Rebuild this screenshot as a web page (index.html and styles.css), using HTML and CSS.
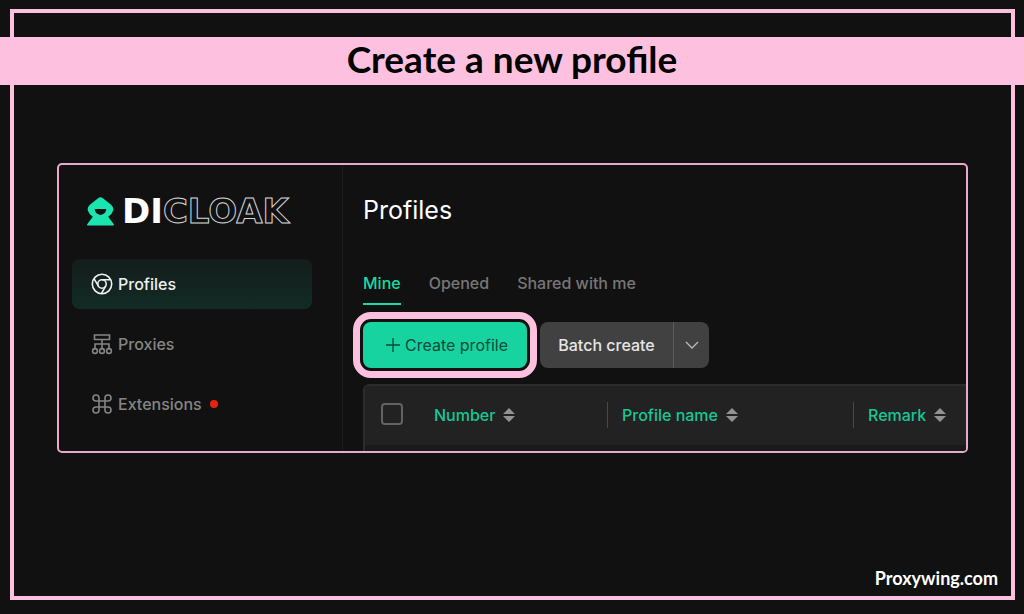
FILE: index.html
```html
<!DOCTYPE html>
<html lang="en">
<head>
<meta charset="utf-8">
<meta name="viewport" content="width=device-width, initial-scale=1">
<title>Create a new profile</title>
<link rel="stylesheet" href="styles.css">
</head>
<body>
<div class="frame">
  <h1 class="banner">Create a new profile</h1>
  <div class="app">
    <aside class="sidebar">
      <div class="brand">
        <svg class="brand-mark" viewBox="0 0 28 30" aria-hidden="true">
          <path fill="#1ae5b0" fill-rule="evenodd" d="M11.5 1.2Q14 -0.600 16.500 1.200L25 8Q28 11 27.200 14Q26 18 22 20.500L28 28.500Q28 29.500 27 29.500H1Q0 29.500 0 28.500L6 20.500Q2 18 0.800 14Q0 11 3 8ZM8 12.500C8 16 11 18.500 14 18.500S20 16 20 12.500Z"/>
        </svg>
        <span class="wordmark">DI<span class="wordmark-outline">CLOAK</span></span>
      </div>
      <nav class="nav">
        <a class="nav-item active" href="#profiles">
          <svg class="icon" viewBox="0 0 22 22" aria-hidden="true"><circle cx="11" cy="11" r="9.700"/><circle cx="11" cy="11" r="4.200"/><path d="M11 6.800H19.600M7.400 13.200L3 5.600M14.600 13.200L10.400 20.600"/></svg>
          Profiles
        </a>
        <a class="nav-item" href="#proxies">
          <svg class="icon" viewBox="0 0 22 22" aria-hidden="true"><path d="M3.500 2H18.500V6.500H3.500ZM11 6.500V15.500M4 15.500V11H18V15.500"/><circle cx="4" cy="18" r="2.400"/><circle cx="11" cy="18" r="2.400"/><circle cx="18" cy="18" r="2.400"/></svg>
          Proxies
        </a>
        <a class="nav-item" href="#extensions">
          <svg class="icon" viewBox="0 0 22 22" aria-hidden="true"><path d="M8 8H14V14H8ZM8 8H5A3 3 0 1 1 8 5ZM14 8V5A3 3 0 1 1 17 8ZM14 14H17A3 3 0 1 1 14 17ZM8 14V17A3 3 0 1 1 5 14Z"/></svg>
          Extensions
          <span class="dot"></span>
        </a>
      </nav>
    </aside>
    <main class="main">
      <h2 class="page-title">Profiles</h2>
      <nav class="tabs">
        <a class="tab selected" href="#mine">Mine</a>
        <a class="tab" href="#opened">Opened</a>
        <a class="tab" href="#shared">Shared with me</a>
      </nav>
      <div class="toolbar">
        <button class="create" type="button">
          <svg class="plus" viewBox="0 0 14 14" aria-hidden="true"><path d="M7 0V14M0 7H14"/></svg>
          Create profile
        </button>
        <div class="split">
          <button class="batch" type="button">Batch create</button>
          <button class="more" type="button" aria-label="More create options">
            <svg class="chevron" viewBox="0 0 14 8" aria-hidden="true"><path d="M1 1L7 7L13 1"/></svg>
          </button>
        </div>
      </div>
      <table class="grid">
        <colgroup><col class="col-check"><col class="col-number"><col class="col-name"><col></colgroup>
        <thead>
          <tr>
            <th><input class="check" type="checkbox" aria-label="Select all"></th>
            <th><div class="head">Number <svg class="sort" viewBox="0 0 12 14" aria-hidden="true"><path d="M6 0L12 6H0ZM0 8H12L6 14Z"/></svg></div></th>
            <th><div class="head divided">Profile name <svg class="sort" viewBox="0 0 12 14" aria-hidden="true"><path d="M6 0L12 6H0ZM0 8H12L6 14Z"/></svg></div></th>
            <th><div class="head divided">Remark <svg class="sort" viewBox="0 0 12 14" aria-hidden="true"><path d="M6 0L12 6H0ZM0 8H12L6 14Z"/></svg></div></th>
          </tr>
        </thead>
      </table>
    </main>
  </div>
  <footer class="credit">Proxywing.com</footer>
</div>
</body>
</html>
```
FILE: styles.css
```css
* { box-sizing: border-box; }

body {
  margin: 0;
  min-height: 100vh;
  padding: 9px 9px 14px 10px;
  display: flex;
  flex-direction: column;
  overflow-x: hidden;
  background: #111;
  color: #fff;
  font-family: Inter, "Liberation Sans", sans-serif;
}

a { color: inherit; text-decoration: none; }

button { border: 0; font: inherit; cursor: pointer; }

.frame {
  flex: 1;
  display: flex;
  flex-direction: column;
  border: 4px solid #fdc0de;
}

.banner {
  margin: 24px -13px 0 -14px;
  height: 48px;
  background: #fdc0de;
  color: #000;
  font: 700 37px/44px Lato, sans-serif;
  text-align: center;
}

.app {
  margin: 78px 43px 0;
  display: flex;
  border: 2px solid #e9a9ca;
  border-radius: 5px;
  overflow: hidden;
}

.sidebar {
  flex: 0 0 284px;
  padding: 31px 30px 20px 13px;
  border-right: 1px solid #1d1d1d;
}

.brand {
  display: flex;
  align-items: center;
  gap: 8px;
  height: 30px;
  padding-left: 15px;
}

.brand-mark { width: 27px; height: 29px; }

.wordmark { font: 700 34px/30px "DejaVu Sans", sans-serif; }

.wordmark-outline {
  color: #111;
  -webkit-text-stroke: 1px #d5d8d8;
}

.nav {
  margin-top: 33px;
  display: flex;
  flex-direction: column;
  gap: 10px;
}

.nav-item {
  display: flex;
  align-items: center;
  gap: 5px;
  height: 50px;
  padding-left: 19px;
  border-radius: 8px;
  color: #858585;
  font-size: 16px;
  font-weight: 500;
}

.nav-item.active {
  color: #f0f0f0;
  background: linear-gradient(#141d1b, #122b25);
}

.icon {
  width: 22px;
  height: 22px;
  fill: none;
  stroke: currentColor;
  stroke-width: 1.6;
}

.dot {
  width: 8px;
  height: 8px;
  margin-left: 3px;
  border-radius: 50%;
  background: #e8220f;
}

.main {
  flex: 1;
  min-width: 0;
  padding: 30px 0 0 20px;
}

.page-title {
  margin: 0;
  font-size: 25px;
  font-weight: 400;
  line-height: 30px;
}

.tabs {
  display: flex;
  gap: 28px;
  margin-top: 44px;
}

.tab {
  height: 36px;
  border-bottom: 2px solid transparent;
  color: #777;
  font-size: 16px;
  font-weight: 500;
  line-height: 28px;
}

.tab.selected {
  color: #17dba3;
  border-color: #17dba3;
}

.toolbar {
  display: flex;
  gap: 13px;
  margin-top: 17px;
}

.create {
  display: flex;
  align-items: center;
  gap: 5px;
  width: 164px;
  height: 46px;
  padding: 0 0 0 23px;
  border-radius: 8px;
  background: #17d3a0;
  color: #0d4a3a;
  font-size: 16px;
  white-space: nowrap;
  outline: 7px solid #fdc0de;
  outline-offset: 3px;
}

.plus, .chevron { fill: none; stroke: currentColor; }

.plus { width: 14px; height: 14px; stroke-width: 1.3; }

.split {
  display: flex;
  height: 46px;
  border-radius: 8px;
  overflow: hidden;
}

.batch {
  width: 133px;
  padding: 0;
  background: #414141;
  color: #e6e6e6;
  font-size: 16px;
  font-weight: 500;
}

.more {
  display: flex;
  align-items: center;
  justify-content: center;
  width: 36px;
  padding: 0;
  border-left: 1px solid #5c5c5c;
  background: #414141;
  color: #bbb;
}

.chevron { width: 14px; height: 8px; stroke-width: 1.3; }

.grid {
  width: 100%;
  margin-top: 16px;
  table-layout: fixed;
  border-collapse: separate;
  border-spacing: 0;
  border: solid #2c2c2c;
  border-width: 2px 0 0 2px;
  border-top-left-radius: 6px;
  padding-bottom: 6px;
  background: #1a1a1a;
}

.col-check { width: 54px; }
.col-number { width: 188px; }
.col-name { width: 246px; }

th {
  height: 59px;
  padding: 0 0 2px;
  background: #222;
  text-align: left;
  vertical-align: middle;
}

.check {
  appearance: none;
  display: block;
  width: 22px;
  height: 22px;
  margin: 0 0 2px 16px;
  border: 2px solid #636363;
  border-radius: 4px;
}

.head {
  display: flex;
  align-items: center;
  gap: 8px;
  height: 26px;
  padding-left: 14px;
  border-left: 1px solid transparent;
  color: #18c796;
  font-size: 16px;
  font-weight: 500;
  white-space: nowrap;
}

.head.divided { border-left-color: #484848; }

.sort { width: 12px; height: 14px; fill: #929292; }

.credit {
  margin-top: auto;
  padding: 0 13px 6px 0;
  font: 700 18px/24px Lato, sans-serif;
  text-align: right;
}
```
